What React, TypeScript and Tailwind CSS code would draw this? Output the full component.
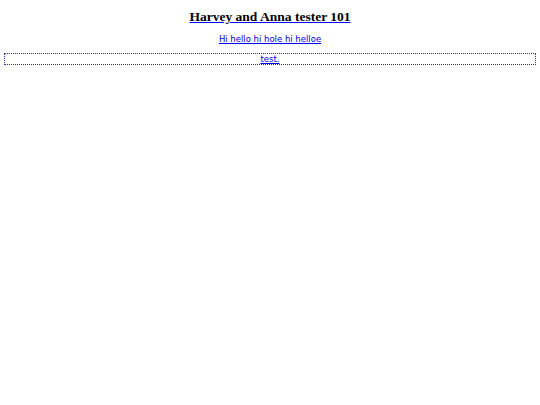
export default function App() {
  return (
    <div className="min-h-[405px] bg-white px-1 pt-[8px]">
      <h1 className="text-center font-['Liberation_Serif',serif] text-[13.5px] font-bold leading-[17px] text-black">
        <a href="#" className="underline decoration-[#0000ee]">
          Harvey and Anna tester 101
        </a>
      </h1>
      <p className="mt-[9px] text-center font-['DejaVu_Sans',sans-serif] text-[8.5px] leading-[11px]">
        <a href="#" className="text-[#0000ee] underline">
          Hi hello hi hole hi helloe
        </a>
      </p>
      <div className="mt-[8px] border border-dotted border-[#3030a0] text-center font-['DejaVu_Sans',sans-serif] text-[8.5px] leading-[10px]">
        <a href="#" className="text-[#0000ee] underline">
          test.
        </a>
      </div>
    </div>
  );
}
